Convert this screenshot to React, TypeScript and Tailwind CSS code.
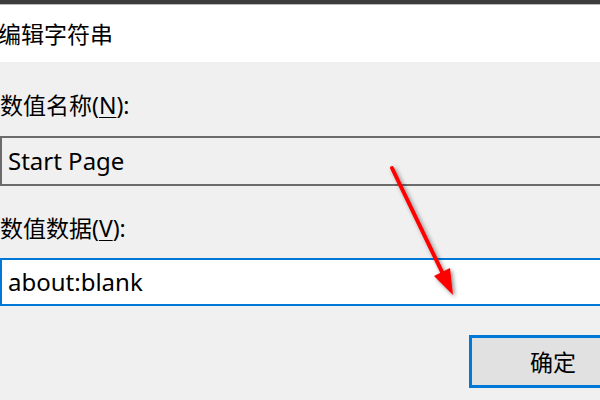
import React from 'react';

const font = { fontFamily: '"Segoe UI", "Noto Sans", "Noto Sans CJK SC", sans-serif' };

const Arrow: React.FC = () => (
    <svg className="absolute inset-0 pointer-events-none" width="600" height="400" viewBox="0 0 600 400">
        <defs>
            <filter id="shadow" x="-20%" y="-20%" width="140%" height="140%">
                <feDropShadow dx="2" dy="2" stdDeviation="2" floodColor="#000" floodOpacity="0.45" />
            </filter>
        </defs>
        <g filter="url(#shadow)">
            <line x1="392" y1="168" x2="443" y2="274" stroke="#ff0000" strokeWidth="4" strokeLinecap="round" />
            <polygon points="453,295 434,276 450,268" fill="#ff0000" />
        </g>
    </svg>
);

export default function App() {
    return (
        <div className="relative w-[600px] h-[400px] overflow-hidden bg-[#f0f0f0] text-[23px] text-black" style={font}>
            <div className="h-[4px] bg-[#3c3c3c]" />
            <div className="h-[1px] bg-[#b9b9b9]" />
            <div className="h-[57px] bg-white flex items-center">
                <span className="ml-[-2px] leading-[30px]">编辑字符串</span>
            </div>

            <div className="mt-[28px] h-[30px] leading-[30px]">
                数值名称(<span className="underline underline-offset-[3px] decoration-1">N</span>):
            </div>
            <div className="mt-[16px] w-[640px] h-[50px] border-2 border-[#6b6b6b] bg-[#f0f0f0] flex items-center pl-[6px]">
                <span className="text-[24px] leading-[30px]">Start Page</span>
            </div>

            <div className="mt-[27px] h-[30px] leading-[30px]">
                数值数据(<span className="underline underline-offset-[3px] decoration-1">V</span>):
            </div>
            <div className="mt-[15px] w-[640px] h-[48px] border-2 border-[#0078d7] bg-white flex items-center pl-[6px]">
                <span className="text-[24px] leading-[30px]">about:blank</span>
            </div>

            <div className="mt-[29px] ml-[469px] w-[168px] h-[53px] border-[3px] border-[#0078d7] bg-[#e1e1e1] flex items-center justify-center">
                <span className="text-[23px] leading-[30px]">确定</span>
            </div>

            <Arrow />
        </div>
    );
}
